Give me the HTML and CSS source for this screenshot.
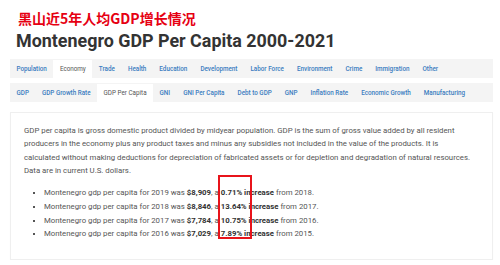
FILE: index.html
```html
<!DOCTYPE html>
<html lang="en">
<head>
  <meta charset="UTF-8">
  <title>Montenegro GDP Per Capita</title>
  <link rel="stylesheet" href="styles.css">
</head>
<body>
  <div class="page">
    <div class="cn-title">黑山近5年人均GDP增长情况</div>
    <h1>Montenegro GDP Per Capita 2000-2021</h1>

    <!-- Main topics -->
    <ul class="tabs">
      <li><a href="#">Population</a></li>
      <li class="active"><a href="#">Economy</a></li>
      <li><a href="#">Trade</a></li>
      <li><a href="#">Health</a></li>
      <li><a href="#">Education</a></li>
      <li><a href="#">Development</a></li>
      <li><a href="#">Labor Force</a></li>
      <li><a href="#">Environment</a></li>
      <li><a href="#">Crime</a></li>
      <li><a href="#">Immigration</a></li>
      <li><a href="#">Other</a></li>
    </ul>

    <!-- Economy sub topics -->
    <ul class="tabs sub">
      <li><a href="#">GDP</a></li>
      <li><a href="#">GDP Growth Rate</a></li>
      <li class="active"><a href="#">GDP Per Capita</a></li>
      <li><a href="#">GNI</a></li>
      <li><a href="#">GNI Per Capita</a></li>
      <li><a href="#">Debt to GDP</a></li>
      <li><a href="#">GNP</a></li>
      <li><a href="#">Inflation Rate</a></li>
      <li><a href="#">Economic Growth</a></li>
      <li><a href="#">Manufacturing</a></li>
    </ul>

    <div class="card">
      <p>GDP per capita is gross domestic product divided by midyear population. GDP is the sum of gross value added by all resident producers in the economy plus any product taxes and minus any subsidies not included in the value of the products. It is calculated without making deductions for depreciation of fabricated assets or for depletion and degradation of natural resources. Data are in current U.S. dollars.</p>
      <ul class="facts">
        <li>Montenegro gdp per capita for 2019 was <b>$8,909</b>, a <b>0.71% increase</b> from 2018.</li>
        <li>Montenegro gdp per capita for 2018 was <b>$8,846</b>, a <b>13.64% increase</b> from 2017.</li>
        <li>Montenegro gdp per capita for 2017 was <b>$7,784</b>, a <b>10.75% increase</b> from 2016.</li>
        <li>Montenegro gdp per capita for 2016 was <b>$7,029</b>, a <b>7.89% increase</b> from 2015.</li>
      </ul>
      <div class="highlight"></div>
    </div>
  </div>
</body>
</html>
```

FILE: styles.css
```css
body {
  margin: 0;
  background: #fff;
  font-family: Roboto, "Liberation Sans", sans-serif;
}

.page {
  padding: 8px 7px 0 10px;
}

.cn-title {
  padding-left: 8px;
  font-family: "Noto Sans CJK SC", sans-serif;
  font-size: 14px;
  line-height: 20px;
  font-weight: 700;
  color: #e60012;
}

h1 {
  margin: 2px 0 7px 6px;
  font-size: 17.9px;
  line-height: 22px;
  font-weight: 700;
  color: #333;
}

.tabs {
  display: flex;
  list-style: none;
  margin: 0 0 5px;
  padding: 1px 0 0;
  background: #f4f4f4;
  white-space: nowrap;
}

.tabs li a {
  display: block;
  padding: 0 6.5px;
  line-height: 18px;
  font-size: 6.3px;
  font-weight: 500;
  color: #3a7cc0;
  text-decoration: none;
}

.tabs li.active a {
  background: #fff;
  color: #555;
  font-weight: 400;
}

.tabs.sub {
  margin-bottom: 10px;
}

.card {
  position: relative;
  border: 1px solid #efefef;
  box-shadow: 0 1px 1px rgba(0, 0, 0, 0.03);
  padding: 10.5px 18px 18px 13px;
  color: #555;
  font-size: 7.8px;
  line-height: 13.6px;
}

.card p {
  margin: 0 0 8.5px;
}

.facts {
  margin: 0;
  padding-left: 20px;
  list-style: square;
}

.facts b {
  color: #333;
}

.highlight {
  position: absolute;
  left: 207px;
  top: 62px;
  width: 30px;
  height: 60px;
  border: 2px solid #e8141b;
}
```
